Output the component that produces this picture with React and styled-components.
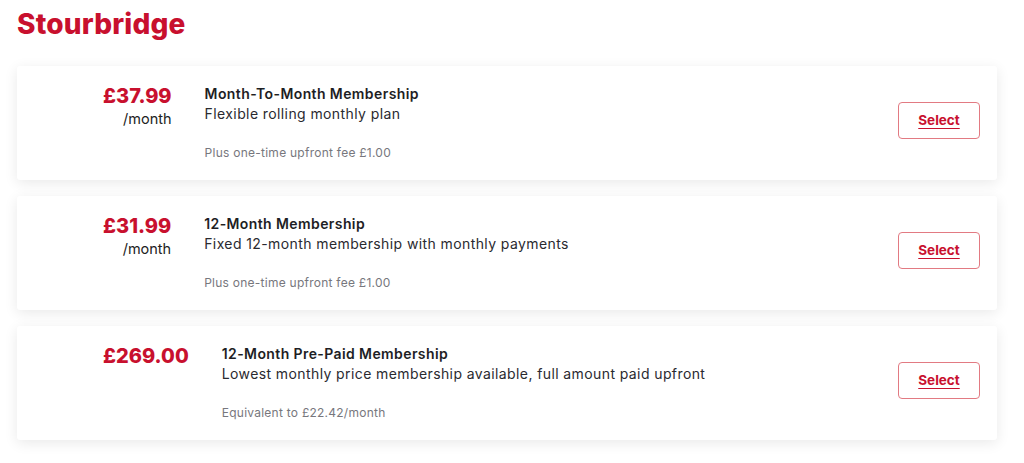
import React from "react";
import styled, { createGlobalStyle } from "styled-components";

const GlobalStyle = createGlobalStyle`
  html, body {
    margin: 0;
    padding: 0;
    background: #ffffff;
    font-family: "Inter", "Noto Sans", sans-serif;
    color: #222222;
  }
`;

const plans = [
  {
    price: "£37.99",
    per: "/month",
    title: "Month-To-Month Membership",
    desc: "Flexible rolling monthly plan",
    note: "Plus one-time upfront fee £1.00",
  },
  {
    price: "£31.99",
    per: "/month",
    title: "12-Month Membership",
    desc: "Fixed 12-month membership with monthly payments",
    note: "Plus one-time upfront fee £1.00",
  },
  {
    price: "£269.00",
    title: "12-Month Pre-Paid Membership",
    desc: "Lowest monthly price membership available, full amount paid upfront",
    note: "Equivalent to £22.42/month",
  },
];

export default function App() {
  return (
    <Page>
      <GlobalStyle />
      <Heading>Stourbridge</Heading>
      <List>
        {plans.map((p) => (
          <Card key={p.title}>
            <PriceBox>
              <Price>{p.price}</Price>
              {p.per && <Per>{p.per}</Per>}
            </PriceBox>
            <Info>
              <Title>{p.title}</Title>
              <Desc>{p.desc}</Desc>
              <Note>{p.note}</Note>
            </Info>
            <SelectButton type="button">Select</SelectButton>
          </Card>
        ))}
      </List>
    </Page>
  );
}

const Page = styled.div`
  padding: 6px 27px 20px 17px;
`;

const Heading = styled.h1`
  margin: 0 0 24px;
  font-size: 28px;
  line-height: 36px;
  font-weight: 800;
  color: #c8102e;
  letter-spacing: 0.2px;
`;

const List = styled.div`
  display: flex;
  flex-direction: column;
  gap: 16px;
`;

const Card = styled.div`
  display: flex;
  align-items: flex-start;
  height: 114px;
  box-sizing: border-box;
  padding: 17px 17px 0 86px;
  background: #ffffff;
  border-radius: 3px;
  box-shadow: 0 3px 14px rgba(0, 0, 0, 0.09);
`;

const PriceBox = styled.div`
  display: flex;
  flex-direction: column;
  align-items: flex-end;
  margin-right: 33px;
`;

const Price = styled.div`
  font-size: 20px;
  line-height: 26px;
  font-weight: 800;
  color: #c8102e;
`;

const Per = styled.div`
  font-size: 14.5px;
  line-height: 20px;
  color: #222222;
`;

const Info = styled.div`
  flex: 1;
  display: flex;
  flex-direction: column;
  padding-top: 1px;
`;

const Title = styled.div`
  font-size: 14px;
  line-height: 20px;
  font-weight: 600;
  letter-spacing: 0.4px;
  color: #1e1e24;
`;

const Desc = styled.div`
  font-size: 14px;
  line-height: 20px;
  letter-spacing: 0.4px;
  color: #2a2a30;
`;

const Note = styled.div`
  margin-top: 21px;
  font-size: 12px;
  line-height: 16px;
  letter-spacing: 0.25px;
  color: #77777d;
`;

const SelectButton = styled.button`
  align-self: center;
  margin-top: -23px;
  width: 82px;
  height: 37px;
  border: 1px solid #e27a82;
  border-radius: 4px;
  background: #ffffff;
  color: #c8102e;
  font-family: inherit;
  font-size: 13.5px;
  font-weight: 700;
  text-decoration: underline;
  text-underline-offset: 3px;
  cursor: pointer;
`;
